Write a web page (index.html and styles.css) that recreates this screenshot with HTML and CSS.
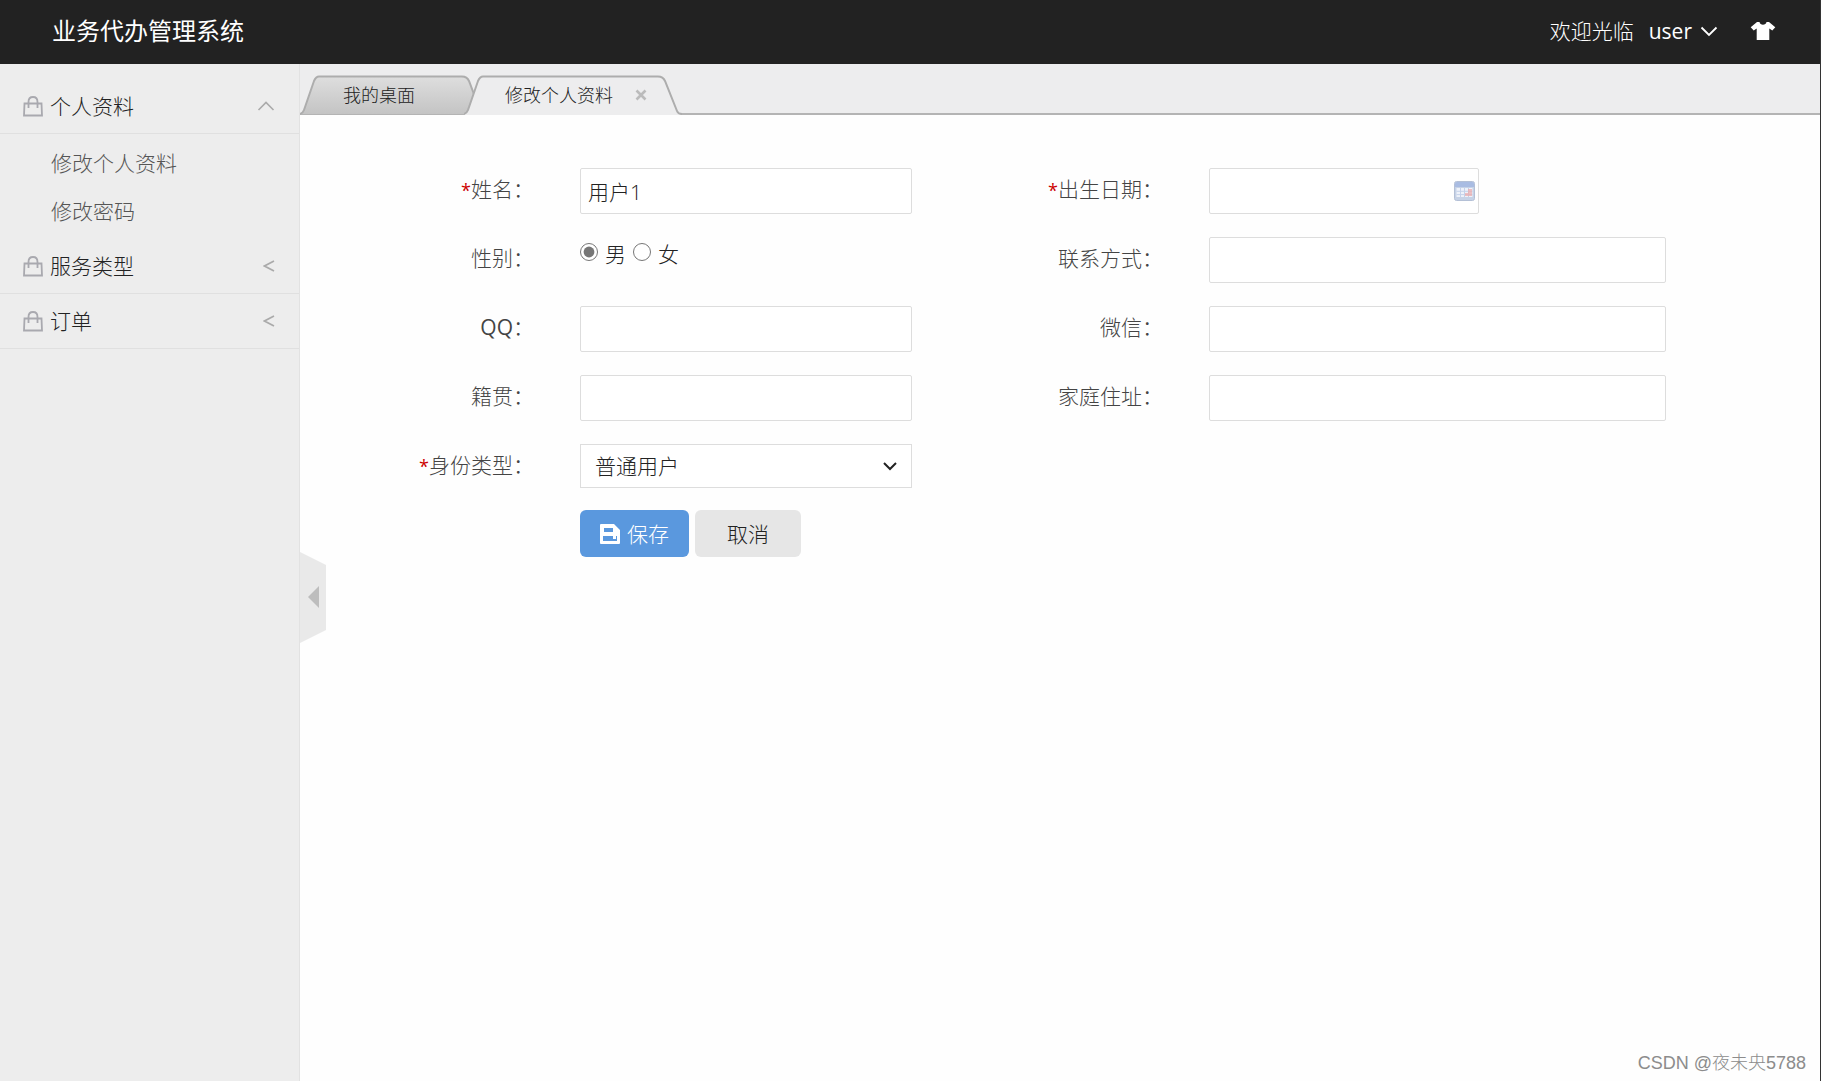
FILE: index.html
```html
<!DOCTYPE html>
<html lang="zh-CN">
<head>
<meta charset="utf-8">
<title>业务代办管理系统</title>
<link rel="stylesheet" href="styles.css">
</head>
<body>
<svg class="defs" width="0" height="0" aria-hidden="true">
  <symbol id="bag" viewBox="0 0 20 21">
    <path d="M1.500 7.500H18.500L19 19.500H1z" fill="none" stroke="currentColor" stroke-width="1.800"/>
    <path d="M5.500 12V6C5.500 2.800 7.300 1 10 1S14.500 2.800 14.500 6V12" fill="none" stroke="currentColor" stroke-width="1.800"/>
  </symbol>
</svg>
<header class="topbar">
  <h1 class="brand">业务代办管理系统</h1>
  <div class="account">
    <span>欢迎光临</span>
    <button class="bar-btn user" type="button">user
      <svg width="18" height="11" viewBox="0 0 18 11"><path d="M1.500 1.500L9 9L16.500 1.500" fill="none" stroke="currentColor" stroke-width="1.800"/></svg>
    </button>
    <button class="bar-btn skin" type="button" aria-label="换肤">
      <svg width="26" height="20" viewBox="0 0 26 20"><path d="M7 1H9.500C10 4.600 16 4.600 16.500 1H19L25.300 6.300L22.300 9.600L19.300 7.600V19H6.700V7.600L3.700 9.600L.7 6.300z" fill="currentColor"/></svg>
    </button>
  </div>
</header>
<div class="shell">
  <nav class="sidebar">
    <button class="group" type="button"><svg class="bag"><use href="#bag"/></svg><span>个人资料</span>
      <svg class="arrow" width="18" height="10" viewBox="0 0 18 10"><path d="M1.500 9L9 1.500L16.500 9" fill="none" stroke="currentColor" stroke-width="1.600"/></svg></button>
    <ul class="submenu">
      <li><a href="#profile">修改个人资料</a></li>
      <li><a href="#password">修改密码</a></li>
    </ul>
    <button class="group" type="button"><svg class="bag"><use href="#bag"/></svg><span>服务类型</span>
      <svg class="arrow" width="12" height="12" viewBox="0 0 12 12"><path d="M11 1L1.500 6L11 11" fill="none" stroke="currentColor" stroke-width="1.700"/></svg></button>
    <button class="group" type="button"><svg class="bag"><use href="#bag"/></svg><span>订单</span>
      <svg class="arrow" width="12" height="12" viewBox="0 0 12 12"><path d="M11 1L1.500 6L11 11" fill="none" stroke="currentColor" stroke-width="1.700"/></svg></button>
  </nav>
  <main class="main">
    <div class="tabs">
      <a class="tab desk" href="#desktop">
        <svg class="tab-bg" width="179" height="40" viewBox="0 0 179 40">
          <linearGradient id="shade" x1="0" y1="0" x2="0" y2="1"><stop offset="0" stop-color="#dedede"/><stop offset="1" stop-color="#c4c4c4"/></linearGradient>
          <path d="M1 39Q3 38 4 35L14 6Q16 1.500 19 1.500H162Q167 1.500 169 6L178 30V39z" fill="url(#shade)"/>
          <path d="M0 39Q3 38 4 35L14 6Q16 1.500 19 1.500H162Q167 1.500 169 6L178 30" fill="none" stroke="#adadad" stroke-width="2"/>
        </svg>
        <span>我的桌面</span>
      </a>
      <div class="tab current">
        <svg class="tab-bg" width="218" height="40" viewBox="0 0 218 40">
          <path d="M0 40Q3 38 4 35L14 6Q16 1.500 19 1.500H194Q199 1.500 201 6L213 36Q214 38 218 40z" fill="#ededee"/>
          <path d="M0 39Q3 38 4 35L14 6Q16 1.500 19 1.500H194Q199 1.500 201 6L213 36Q214 39 218 39" fill="none" stroke="#adadad" stroke-width="2"/>
        </svg>
        <a href="#profile">修改个人资料</a>
        <button class="close" type="button" aria-label="关闭"><svg width="12" height="12" viewBox="0 0 12 12"><path d="M1.500 1.500L10.500 10.500M10.500 1.500L1.500 10.500" stroke="currentColor" stroke-width="2.600"/></svg></button>
      </div>
    </div>
    <form class="form">
      <label class="label" for="name"><b class="req">*</b>姓名：</label>
      <input class="field" id="name" type="text" value="用户1">
      <label class="label" for="birth"><b class="req">*</b>出生日期：</label>
      <div class="date">
        <input class="field" id="birth" type="text">
        <svg class="cal" width="21" height="20" viewBox="0 0 21 20">
          <rect x=".5" y=".5" width="20" height="19" rx="2" fill="#c6d2e6" stroke="#b4c0d6"/>
          <path d="M1 3Q1 1 3 1H18Q20 1 20 3V6H1z" fill="#a9bce2"/>
          <rect x="2.500" y="7" width="16" height="9" fill="#eef2fa"/>
          <path d="M2.500 10.300H18.500M2.500 13.600H18.500M6.500 7V16M10.500 7V16M14.500 7V16" stroke="#c5d2ea"/>
          <path d="M14 8H18V15H11V12H14z" fill="#eda9a9" opacity=".7"/>
        </svg>
      </div>

      <span class="label" id="sex">性别：</span>
      <div class="radios" role="radiogroup" aria-labelledby="sex">
        <input type="radio" id="male" name="sex" checked><label for="male">男</label>
        <input type="radio" id="female" name="sex"><label for="female">女</label>
      </div>
      <label class="label" for="phone">联系方式：</label>
      <input class="field" id="phone" type="text">

      <label class="label" for="qq"><span class="latin">QQ</span>：</label>
      <input class="field" id="qq" type="text">
      <label class="label" for="wechat">微信：</label>
      <input class="field" id="wechat" type="text">

      <label class="label" for="origin">籍贯：</label>
      <input class="field" id="origin" type="text">
      <label class="label" for="address">家庭住址：</label>
      <input class="field" id="address" type="text">

      <label class="label" for="role"><b class="req">*</b>身份类型：</label>
      <div class="pick">
        <select class="field select" id="role"><option>普通用户</option></select>
        <svg class="caret" width="14" height="9" viewBox="0 0 14 9"><path d="M1 1L7 7L13 1" fill="none" stroke="#222" stroke-width="2"/></svg>
      </div>

      <div class="actions">
        <button class="btn save" type="submit"><svg width="20" height="20" viewBox="0 0 20 20"><path fill="currentColor" fill-rule="evenodd" d="M1 0H14L20 6V19Q20 20 19 20H1Q0 20 0 19V1Q0 0 1 0zM4 4V8H13V4zM3 12V17H17V12zM13 12H16V15H13z"/></svg>保存</button>
        <button class="btn cancel" type="button">取消</button>
      </div>
    </form>
    <button class="fold" type="button" aria-label="收起菜单">
      <svg width="27" height="92" viewBox="0 0 27 92"><path d="M0 0L26 13V78L0 91z" fill="#e9e9e9"/><path d="M19 34V56L8 45z" fill="#bdbdbd"/></svg>
    </button>
    <footer class="credit">CSDN @夜未央5788</footer>
  </main>
</div>
</body>
</html>
```

FILE: styles.css
```css
* { box-sizing: border-box; }

body {
  margin: 0;
  min-height: 100vh;
  display: flex;
  flex-direction: column;
  font: 21px/32px "Open Sans", "Noto Sans CJK SC", sans-serif;
  font-weight: 300;
  color: #222;
  background: #fefefe;
  border-right: 1px solid #333;
}

button, input, select { font: inherit; color: inherit; }
button { border: 0; padding: 0; background: none; cursor: pointer; }
a { color: inherit; text-decoration: none; }
svg { display: block; flex: none; }
.defs { position: absolute; }

.topbar {
  height: 64px;
  padding: 0 44px 2px 52px;
  display: flex;
  align-items: center;
  justify-content: space-between;
  background: #222;
  color: #fff;
}
.brand { margin: 0; font-size: 24px; font-weight: 400; }
.account { display: flex; align-items: center; gap: 15px; }
.bar-btn { display: flex; align-items: center; gap: 8px; font-weight: 400; }
.skin { margin-left: 17px; }

.shell { flex: 1; display: flex; }

.sidebar {
  width: 300px;
  flex: none;
  padding-top: 15px;
  background: #ededed;
  border-right: 1px solid #e2e2e2;
}
.group {
  width: 100%;
  height: 55px;
  padding: 0 24px 0 23px;
  display: flex;
  align-items: center;
  gap: 7px;
  border-bottom: 1px solid #e0e0e0;
  text-align: left;
}
.bag { width: 20px; height: 21px; color: #a9a9af; }
.arrow { margin-left: auto; color: #aaa; }
.submenu { list-style: none; margin: 0; padding: 5px 0 4px 51px; line-height: 48px; color: #555; }

.main { flex: 1; min-width: 0; display: flex; flex-direction: column; position: relative; }

.tabs {
  height: 51px;
  padding-top: 11px;
  display: flex;
  background: #ededee;
  box-shadow: inset 0 -2px #b4b4b4;
  font-size: 18px;
}
.tab { height: 40px; display: flex; align-items: center; position: relative; }
.tab > :not(.tab-bg) { position: relative; }
.tab-bg { position: absolute; left: 0; top: 0; }
.desk { width: 164px; padding-left: 43px; }
.current { width: 218px; padding-left: 41px; gap: 22px; }
.close { color: #bbb; }

.form {
  padding: 53px 0 0;
  display: grid;
  grid-template-columns: 280fr 332fr 297fr 457fr 154fr;
  grid-auto-rows: 46px;
  row-gap: 23px;
}
.label { padding: 5px 46px 0 0; text-align: right; color: #444; }
.label:nth-child(4n + 1) { grid-column: 1; }
.req { font-size: 18px; font-weight: 400; color: #c00; }
.latin { font-weight: 400; }
.field {
  width: 100%;
  min-width: 0;
  height: 46px;
  padding: 0 7px;
  border: 1px solid #ddd;
  border-radius: 2px;
  background: #fff;
}
.date { width: 59%; position: relative; }
.cal { position: absolute; right: 4px; top: 13px; pointer-events: none; }
.radios { display: flex; align-items: flex-start; }
.radios input { width: 18px; height: 18px; margin: 6px 7px 0 0; accent-color: #767676; }
.radios label { margin: 1px 7px 0 0; }
.pick { position: relative; }
.select { height: 44px; padding: 0 14px; border-radius: 0; appearance: none; }
.caret { position: absolute; right: 15px; top: 18px; pointer-events: none; }
.actions { grid-column: 2; display: flex; gap: 6px; margin-top: -3px; }
.btn {
  height: 47px;
  display: flex;
  align-items: center;
  justify-content: center;
  gap: 7px;
  border-radius: 6px;
}
.save { width: 109px; background: #5a98de; color: #fff; }
.cancel { width: 106px; background: #e6e6e6; }

.fold { position: absolute; left: 0; top: 488px; }
.credit {
  margin-top: auto;
  padding: 0 14px 2px;
  text-align: right;
  font-family: "Liberation Sans", "Noto Sans CJK SC", sans-serif;
  font-size: 18px;
  color: #8c8c8c;
}
```
